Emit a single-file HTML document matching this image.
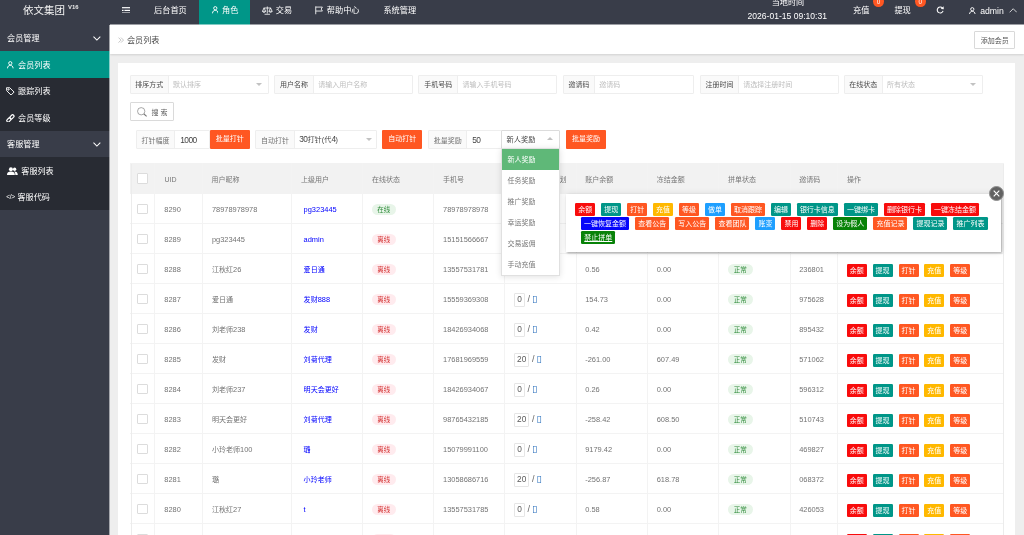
<!DOCTYPE html><html lang="zh"><head><meta charset="utf-8"><title>会员列表</title><style>
html,body{margin:0;padding:0}
html{background:#eee}
body{will-change:transform}
body{width:1024px;height:535px;overflow:hidden;background:#eee;position:relative;font-family:"Liberation Sans","Noto Sans CJK SC",sans-serif;font-size:7px;color:#666}
div,span,a{box-sizing:border-box}
.a{position:absolute;white-space:nowrap}
.hd{left:0;top:0;width:1024px;height:25px;background:#393D49}
.ht{color:#fff;font-size:8.2px;height:20px;line-height:20px;top:0.9px}
.sb{left:0;top:24px;width:110px;height:520px;background:#393D49}
.mi{left:0;width:110px;height:26.5px;line-height:26.5px;color:#fff;font-size:8.1px}
.mi.ch{background:#282B33}
.mi.on{background:#009688}
.mi span{position:absolute;top:1.9px}
.bc{left:110px;top:24.5px;width:914px;height:29.7px;background:#fff;box-shadow:0 0.5px 2px rgba(0,0,0,.12)}
.card{left:118px;top:62.6px;width:897.2px;height:480px;background:#fff}
.fb{top:75.4px;height:18.5px;border:1px solid #eeeeee;border-radius:1px;background:#fff}
.fb .l,.ab .l{position:absolute;left:0;top:0;bottom:0;background:#fafafa;border-right:1px solid #eeeeee;color:#4a4a4a;text-align:center;line-height:18.8px}
.fb .p{position:absolute;top:0;line-height:18.8px;color:#bdbdbd}
.tri{position:absolute;width:0;height:0;border-left:3.1px solid transparent;border-right:3.1px solid transparent;border-top:3.3px solid #c2c2c2}
.triu{position:absolute;width:0;height:0;border-left:3.1px solid transparent;border-right:3.1px solid transparent;border-bottom:3.3px solid #c2c2c2}
.ab{top:130px;height:18.6px;border:1px solid #eeeeee;border-radius:1px;background:#fff}
.ab .l{color:#727272}
.d{font-size:8.3px;letter-spacing:-0.5px}
.ab .v{position:absolute;top:0;line-height:18px;color:#444;font-size:7.2px}
.ob{top:130px;height:18.7px;line-height:18.3px;background:#FF5722;color:#fff;text-align:center;border-radius:1px;font-size:7px}
.th{left:130px;top:163px;width:873.8px;height:31px;background:#f2f2f2}
.tr{left:130px;width:873.8px;height:30px;border-bottom:1px solid #f3f3f3;background:#fff}
.vl{top:163.2px;width:1px;height:380px;background:#f3f3f3}
.c{position:absolute;top:0;height:100%;white-space:nowrap}
.th .c{line-height:33.5px;color:#777}
.tr .c{line-height:31.3px;color:#747474;font-size:7.05px}
.n{font-size:7.45px}
.tr .lk{color:#0000ff;font-size:7.05px}
.cb{position:absolute;left:7.1px;width:10.8px;height:10.6px;border:1px solid #dcdcdc;border-radius:1px;background:#fff}
.pill{position:absolute;left:9.1px;top:9.8px;height:11.6px;line-height:12.6px;border-radius:5.8px;font-size:6.5px;text-align:center}
.pg{background:#e8f5e9;color:#2e8b3a}
.pr{background:#ffebee;color:#d32f2f}
.b{position:absolute;height:12.75px;line-height:14.2px;border-radius:1.2px;color:#fff;font-size:7px;text-align:center;white-space:nowrap}
.r{background:#f80c0c}.t{background:#009688}.o{background:#FF5722}.y{background:#FFB800}.bl{background:#1E9FFF}.db{background:#0606fa}.g{background:#088208}
.ib{position:absolute;top:9.4px;height:13.2px;line-height:11.6px;border:1px solid #e6e6e6;border-radius:1px;text-align:center;color:#5a5a5a;font-size:8.3px;background:#fff}
.dd{left:501px;top:147.7px;width:58.8px;height:128.6px;background:#fff;border:1px solid #e0e0e0;box-shadow:0 1px 6px rgba(0,0,0,.12)}
.dd div{position:absolute;left:0;width:100%;height:21.2px;line-height:22.6px;padding-left:5.6px;color:#777}
.dd div.s{background:#5FB878;color:#fff}
.pop{left:566.4px;top:193.6px;width:434.6px;height:58.4px;background:#fff;box-shadow:0.5px 0.5px 2px rgba(0,0,0,.33),0 0 7px rgba(0,0,0,.10)}
</style></head><body>
<div class="a hd">
<div class="a" style="left:23px;top:1px;height:19.6px;line-height:19.6px;font-size:10.5px;color:#f2f2f2">依文集团</div>
<div class="a" style="left:68px;top:2.9px;font-size:5.9px;line-height:9px;font-weight:bold;color:#e8e8e8">V16</div>
<svg class="a" style="left:121.8px;top:6.5px" width="8.6" height="6.8" viewBox="0 0 8.6 6.8"><g fill="#fff"><rect x="0" y="0.1" width="8.2" height="1.2"/><rect x="0" y="2.8" width="1.6" height="1.2"/><rect x="2.4" y="2.8" width="5.8" height="1.2"/><rect x="0" y="5.5" width="8.2" height="1.2"/></g></svg>
<div class="a ht" style="left:154px">后台首页</div>
<div class="a" style="left:199px;top:0;width:51.2px;height:25px;background:#009688"></div>
<svg class="a" style="left:211.8px;top:6.2px" width="6.6" height="7.6" viewBox="0 0 13 15"><g fill="none" stroke="#fff" stroke-width="1.85"><circle cx="6.5" cy="4.4" r="3.2"/><path d="M1 14.5 C1 10.5 3.5 8.6 6.5 8.6 C9.5 8.6 12 10.5 12 14.5"/></g></svg>
<div class="a ht" style="left:222px">角色</div>
<svg class="a" style="left:262px;top:5.6px" width="10.6" height="9" viewBox="0 0 21 18"><g fill="none" stroke="#fff" stroke-width="1.6"><path d="M10.5 1 V15 M5 16.5 H16 M3 4 H18"/><path d="M0.8 10.5 L4 4 L7.2 10.5 Z M13.8 10.5 L17 4 L20.2 10.5 Z"/><path d="M0.8 10.5 C1.5 13.5 6.5 13.5 7.2 10.5 M13.8 10.5 C14.5 13.5 19.5 13.5 20.2 10.5"/></g></svg>
<div class="a ht" style="left:275.7px">交易</div>
<svg class="a" style="left:315.4px;top:6px" width="8.4" height="8.6" viewBox="0 0 17 17"><g fill="none" stroke="#fff" stroke-width="1.7"><path d="M1.5 0.5 V16.5"/><path d="M1.5 2 H15 L12.5 6 L15 10 H1.5"/></g></svg>
<div class="a ht" style="left:326.8px">帮助中心</div>
<div class="a ht" style="left:383.4px">系统管理</div>
<div class="a ht" style="left:771.7px;top:-7px;font-size:8.1px">当地时间</div>
<div class="a" style="left:747.6px;top:11.2px;height:10px;line-height:10px;font-size:8.55px;color:#fff">2026-01-15 09:10:31</div>
<div class="a ht" style="left:853.1px;top:0.6px">充值</div>
<div class="a" style="left:873.2px;top:-4px;width:10.8px;height:11.2px;border-radius:5.4px;background:#FF5722;color:#fff;font-size:6.4px;line-height:11.4px;text-align:center">0</div>
<div class="a ht" style="left:894.4px;top:0.6px">提现</div>
<div class="a" style="left:914.8px;top:-4px;width:10.8px;height:11.2px;border-radius:5.4px;background:#FF5722;color:#fff;font-size:6.4px;line-height:11.4px;text-align:center">0</div>
<svg class="a" style="left:935.6px;top:6.3px" width="8.4" height="8" viewBox="0 0 17 16"><path d="M13.2 4.2 A6 6 0 1 0 14.3 9.6" fill="none" stroke="#fff" stroke-width="2.2"/><path d="M9.6 6.2 L15.8 6.6 L15.4 0.6 Z" fill="#fff"/></svg>
<svg class="a" style="left:969.4px;top:6.6px" width="6.6" height="7.6" viewBox="0 0 13 15"><g fill="none" stroke="#fff" stroke-width="1.85"><circle cx="6.5" cy="4.4" r="3.2"/><path d="M1 14.5 C1 10.5 3.5 8.6 6.5 8.6 C9.5 8.6 12 10.5 12 14.5"/></g></svg>
<div class="a ht" style="left:980.2px;top:0.6px;font-size:8.7px">admin</div>
<svg class="a" style="left:1008.8px;top:8.4px" width="8.4" height="4.8" viewBox="0 0 17 10"><path d="M1 9 L8.5 1.5 L16 9" fill="none" stroke="#fff" stroke-width="1.6"/></svg>
</div>
<div class="a sb"></div>
<div class="a mi " style="top:24.50px"><span style="left:7.1px">会员管理</span><svg style="position:absolute;left:92.8px;top:11.6px" width="7.8" height="4.6" viewBox="0 0 16 9"><path d="M1 1 L8 8 L15 1" fill="none" stroke="#fff" stroke-width="2.1"/></svg></div>
<div class="a mi ch on" style="top:51.00px"><svg style="position:absolute;left:7px;top:10.1px" width="6.6" height="7.6" viewBox="0 0 13 15"><g fill="none" stroke="#fff" stroke-width="1.85"><circle cx="6.5" cy="4.4" r="3.2"/><path d="M1 14.5 C1 10.5 3.5 8.6 6.5 8.6 C9.5 8.6 12 10.5 12 14.5"/></g></svg><span style="left:18.1px">会员列表</span></div>
<div class="a mi ch" style="top:77.50px"><svg style="position:absolute;left:6.4px;top:9px" width="8.6" height="8.6" viewBox="0 0 17 17"><g fill="none" stroke="#fff" stroke-width="1.9"><path d="M1 1.5 H7.5 L16 10 L10 16 L1.5 7.5 Z"/><circle cx="5" cy="5" r="1.3"/></g></svg><span style="left:18.1px">跟踪列表</span></div>
<div class="a mi ch" style="top:104.00px"><svg style="position:absolute;left:6.4px;top:9.6px" width="8.8" height="8.8" viewBox="0 0 17 17"><g fill="none" stroke="#fff" stroke-width="2.3"><rect x="-4.6" y="-2.7" width="9.2" height="5.4" rx="2.7" transform="translate(5.6 11.4) rotate(-45)"/><rect x="-4.6" y="-2.7" width="9.2" height="5.4" rx="2.7" transform="translate(11.4 5.6) rotate(-45)"/></g></svg><span style="left:18.1px">会员等级</span></div>
<div class="a mi " style="top:130.50px"><span style="left:7.1px">客服管理</span><svg style="position:absolute;left:92.8px;top:11.6px" width="7.8" height="4.6" viewBox="0 0 16 9"><path d="M1 1 L8 8 L15 1" fill="none" stroke="#fff" stroke-width="2.1"/></svg></div>
<div class="a mi ch" style="top:157.00px"><svg style="position:absolute;left:6.8px;top:10px" width="10.8" height="8" viewBox="0 0 22 16"><g fill="#fff"><circle cx="8" cy="4.5" r="4"/><path d="M0 16 C0 11 3 9 8 9 C13 9 16 11 16 16 Z"/><circle cx="15.5" cy="4.5" r="3.4"/><path d="M17 16 C17 12 16 10 14 9 C19 8.6 22 11 22 16 Z"/></g></svg><span style="left:21.3px">客服列表</span></div>
<div class="a mi ch" style="top:183.50px"><span style="left:6.2px;font-size:6.6px;letter-spacing:-0.3px;top:0">&lt;/&gt;</span><span style="left:17.5px">客服代码</span></div>
<div class="a bc">
<svg class="a" style="left:8.3px;top:12.6px" width="6" height="6.2" viewBox="0 0 12 12"><path d="M1 1 L6 6 L1 11 M6 1 L11 6 L6 11" fill="none" stroke="#b4b4b4" stroke-width="1.5"/></svg>
<div class="a" style="left:16.9px;top:0;height:29.7px;line-height:32.2px;font-size:8.15px;color:#4a4a4a">会员列表</div>
<div class="a" style="left:864.4px;top:6.6px;width:40.5px;height:17.5px;line-height:17.4px;border:1px solid #d9d9d9;border-radius:1px;text-align:center;color:#555;background:#fff">添加会员</div>
</div>
<div class="a card"></div>
<div class="a fb" style="left:129.9px;width:138.9px"><div class="l" style="width:37.8px">排序方式</div><div class="p" style="left:42.2px">默认排序</div><div class="tri" style="right:5.6px;top:6.6px"></div></div>
<div class="a fb" style="left:274.1px;width:138.9px"><div class="l" style="width:38.8px">用户名称</div><div class="p" style="left:43.2px">请输入用户名称</div></div>
<div class="a fb" style="left:418.4px;width:138.9px"><div class="l" style="width:38.8px">手机号码</div><div class="p" style="left:43.2px">请输入手机号码</div></div>
<div class="a fb" style="left:562.9px;width:131.1px"><div class="l" style="width:31.0px">邀请码</div><div class="p" style="left:35.4px">邀请码</div></div>
<div class="a fb" style="left:700.0px;width:138.7px"><div class="l" style="width:37.8px">注册时间</div><div class="p" style="left:42.2px">请选择注册时间</div></div>
<div class="a fb" style="left:843.9px;width:138.9px"><div class="l" style="width:37.8px">在线状态</div><div class="p" style="left:42.2px">所有状态</div><div class="tri" style="right:5.6px;top:6.6px"></div></div>
<div class="a" style="left:130px;top:102px;width:43.8px;height:18.8px;border:1px solid #dadada;border-radius:1px;background:#fff"><svg style="position:absolute;left:6.2px;top:4.2px" width="10.4" height="10" viewBox="0 0 21 20"><g fill="none" stroke="#777" stroke-width="1.3"><circle cx="8.5" cy="8.5" r="7.4"/><path d="M14 14 L19.5 19" stroke-width="2.2"/></g></svg><div class="a" style="left:20.6px;top:0;line-height:20.6px;color:#5a5a5a">搜 索</div></div>
<div class="a ab" style="left:136px;width:74px"><div class="l" style="width:38.2px;line-height:19px">打针幅度</div><div class="v" style="left:43.3px;font-size:8.4px;letter-spacing:-0.6px;line-height:18.6px">1000</div></div>
<div class="a ob" style="left:209.6px;width:40.3px">批量打针</div>
<div class="a ab" style="left:255px;width:122px"><div class="l" style="width:39px;line-height:19px">自动打针</div><div class="v" style="left:43.2px;line-height:17.4px"><span class="d">30</span>打针(代<span class="d">4</span>)</div><div class="tri" style="right:4.4px;top:6.8px"></div></div>
<div class="a ob" style="left:382.3px;width:40.1px">自动打针</div>
<div class="a ab" style="left:428px;width:74px"><div class="l" style="width:38.3px;line-height:19px">批量奖励</div><div class="v" style="left:43.2px;font-size:8.4px;letter-spacing:-0.6px;line-height:18.6px">50</div></div>
<div class="a ab" style="left:501px;width:58.8px;border-color:#dcdcdc"><div class="v" style="left:4.6px">新人奖励</div><div class="triu" style="right:5.8px;top:6.2px"></div></div>
<div class="a ob" style="left:565.9px;width:40.1px">批量奖励</div>
<div class="a th">
<div class="cb" style="top:10.4px"></div>
<div class="c" style="left:34.4px">UID</div>
<div class="c" style="left:81.6px">用户昵称</div>
<div class="c" style="left:171.0px">上级用户</div>
<div class="c" style="left:241.9px">在线状态</div>
<div class="c" style="left:313.1px">手机号</div>
<div class="c" style="left:455.3px">账户余额</div>
<div class="c" style="left:526.8px">冻结金额</div>
<div class="c" style="left:598.0px">拼单状态</div>
<div class="c" style="left:669.3px">邀请码</div>
<div class="c" style="left:716.9px">操作</div>
<div class="c" style="left:auto;right:437.2px">已做单数/计划</div>
</div>
<div class="a tr" style="top:194.00px">
<div class="cb" style="top:9.8px"></div>
<div class="c" style="left:34.3px"><span class="n">8290</span></div>
<div class="c" style="left:81.9px"><span class="n">78978978978</span></div>
<div class="c lk" style="left:173.6px"><span class="n">pg323445</span></div>
<div class="c" style="left:232.6px"><span class="pill pg" style="width:24.2px">在线</span></div>
<div class="c" style="left:313.0px"><span class="n">78978978978</span></div>
<span class="b r" style="left:716.8px;top:9.6px;width:20px;height:13px">余额</span>
<span class="b t" style="left:742.6px;top:9.6px;width:20px;height:13px">提现</span>
<span class="b o" style="left:768.5px;top:9.6px;width:20px;height:13px">打针</span>
<span class="b y" style="left:794.3px;top:9.6px;width:20px;height:13px">充值</span>
<span class="b o" style="left:820.2px;top:9.6px;width:20px;height:13px">等级</span>
</div>
<div class="a tr" style="top:224.00px">
<div class="cb" style="top:9.8px"></div>
<div class="c" style="left:34.3px"><span class="n">8289</span></div>
<div class="c" style="left:81.9px"><span class="n">pg323445</span></div>
<div class="c lk" style="left:173.6px"><span class="n">admin</span></div>
<div class="c" style="left:232.6px"><span class="pill pr" style="width:24.2px">离线</span></div>
<div class="c" style="left:313.0px"><span class="n">15151566667</span></div>
<span class="b r" style="left:716.8px;top:9.6px;width:20px;height:13px">余额</span>
<span class="b t" style="left:742.6px;top:9.6px;width:20px;height:13px">提现</span>
<span class="b o" style="left:768.5px;top:9.6px;width:20px;height:13px">打针</span>
<span class="b y" style="left:794.3px;top:9.6px;width:20px;height:13px">充值</span>
<span class="b o" style="left:820.2px;top:9.6px;width:20px;height:13px">等级</span>
</div>
<div class="a tr" style="top:254.00px">
<div class="cb" style="top:9.8px"></div>
<div class="c" style="left:34.3px"><span class="n">8288</span></div>
<div class="c" style="left:81.9px">江秋红<span class="n">26</span></div>
<div class="c lk" style="left:173.6px">爱日通</div>
<div class="c" style="left:232.6px"><span class="pill pr" style="width:24.2px">离线</span></div>
<div class="c" style="left:313.0px"><span class="n">13557531781</span></div>
<div class="c" style="left:455.2px"><span class="n">0.56</span></div>
<div class="c" style="left:526.7px"><span class="n">0.00</span></div>
<div class="c" style="left:588.7px"><span class="pill pg" style="width:25px">正常</span></div>
<div class="c" style="left:669.2px"><span class="n">236801</span></div>
<span class="b r" style="left:716.8px;top:9.6px;width:20px;height:13px">余额</span>
<span class="b t" style="left:742.6px;top:9.6px;width:20px;height:13px">提现</span>
<span class="b o" style="left:768.5px;top:9.6px;width:20px;height:13px">打针</span>
<span class="b y" style="left:794.3px;top:9.6px;width:20px;height:13px">充值</span>
<span class="b o" style="left:820.2px;top:9.6px;width:20px;height:13px">等级</span>
</div>
<div class="a tr" style="top:284.00px">
<div class="cb" style="top:9.8px"></div>
<div class="c" style="left:34.3px"><span class="n">8287</span></div>
<div class="c" style="left:81.9px">爱日通</div>
<div class="c lk" style="left:173.6px">发财<span class="n">888</span></div>
<div class="c" style="left:232.6px"><span class="pill pr" style="width:24.2px">离线</span></div>
<div class="c" style="left:313.0px"><span class="n">15559369308</span></div>
<div class="c" style="left:384.2px"><span class="ib" style="left:0;width:10.6px">0</span><span style="position:absolute;left:13.3px;font-size:9px;color:#666">/</span><span style="position:absolute;left:17.8px;top:-1px;font-size:9.6px;color:#2a6fbd;font-family:'DejaVu Sans',sans-serif">▯</span></div>
<div class="c" style="left:455.2px"><span class="n">154.73</span></div>
<div class="c" style="left:526.7px"><span class="n">0.00</span></div>
<div class="c" style="left:588.7px"><span class="pill pg" style="width:25px">正常</span></div>
<div class="c" style="left:669.2px"><span class="n">975628</span></div>
<span class="b r" style="left:716.8px;top:9.6px;width:20px;height:13px">余额</span>
<span class="b t" style="left:742.6px;top:9.6px;width:20px;height:13px">提现</span>
<span class="b o" style="left:768.5px;top:9.6px;width:20px;height:13px">打针</span>
<span class="b y" style="left:794.3px;top:9.6px;width:20px;height:13px">充值</span>
<span class="b o" style="left:820.2px;top:9.6px;width:20px;height:13px">等级</span>
</div>
<div class="a tr" style="top:314.00px">
<div class="cb" style="top:9.8px"></div>
<div class="c" style="left:34.3px"><span class="n">8286</span></div>
<div class="c" style="left:81.9px">刘老师<span class="n">238</span></div>
<div class="c lk" style="left:173.6px">发财</div>
<div class="c" style="left:232.6px"><span class="pill pr" style="width:24.2px">离线</span></div>
<div class="c" style="left:313.0px"><span class="n">18426934068</span></div>
<div class="c" style="left:384.2px"><span class="ib" style="left:0;width:10.6px">0</span><span style="position:absolute;left:13.3px;font-size:9px;color:#666">/</span><span style="position:absolute;left:17.8px;top:-1px;font-size:9.6px;color:#2a6fbd;font-family:'DejaVu Sans',sans-serif">▯</span></div>
<div class="c" style="left:455.2px"><span class="n">0.42</span></div>
<div class="c" style="left:526.7px"><span class="n">0.00</span></div>
<div class="c" style="left:588.7px"><span class="pill pg" style="width:25px">正常</span></div>
<div class="c" style="left:669.2px"><span class="n">895432</span></div>
<span class="b r" style="left:716.8px;top:9.6px;width:20px;height:13px">余额</span>
<span class="b t" style="left:742.6px;top:9.6px;width:20px;height:13px">提现</span>
<span class="b o" style="left:768.5px;top:9.6px;width:20px;height:13px">打针</span>
<span class="b y" style="left:794.3px;top:9.6px;width:20px;height:13px">充值</span>
<span class="b o" style="left:820.2px;top:9.6px;width:20px;height:13px">等级</span>
</div>
<div class="a tr" style="top:344.00px">
<div class="cb" style="top:9.8px"></div>
<div class="c" style="left:34.3px"><span class="n">8285</span></div>
<div class="c" style="left:81.9px">发财</div>
<div class="c lk" style="left:173.6px">刘菊代理</div>
<div class="c" style="left:232.6px"><span class="pill pr" style="width:24.2px">离线</span></div>
<div class="c" style="left:313.0px"><span class="n">17681969559</span></div>
<div class="c" style="left:384.2px"><span class="ib" style="left:0;width:15.0px">20</span><span style="position:absolute;left:17.7px;font-size:9px;color:#666">/</span><span style="position:absolute;left:22.2px;top:-1px;font-size:9.6px;color:#2a6fbd;font-family:'DejaVu Sans',sans-serif">▯</span></div>
<div class="c" style="left:455.2px"><span class="n">-261.00</span></div>
<div class="c" style="left:526.7px"><span class="n">607.49</span></div>
<div class="c" style="left:588.7px"><span class="pill pg" style="width:25px">正常</span></div>
<div class="c" style="left:669.2px"><span class="n">571062</span></div>
<span class="b r" style="left:716.8px;top:9.6px;width:20px;height:13px">余额</span>
<span class="b t" style="left:742.6px;top:9.6px;width:20px;height:13px">提现</span>
<span class="b o" style="left:768.5px;top:9.6px;width:20px;height:13px">打针</span>
<span class="b y" style="left:794.3px;top:9.6px;width:20px;height:13px">充值</span>
<span class="b o" style="left:820.2px;top:9.6px;width:20px;height:13px">等级</span>
</div>
<div class="a tr" style="top:374.00px">
<div class="cb" style="top:9.8px"></div>
<div class="c" style="left:34.3px"><span class="n">8284</span></div>
<div class="c" style="left:81.9px">刘老师<span class="n">237</span></div>
<div class="c lk" style="left:173.6px">明天会更好</div>
<div class="c" style="left:232.6px"><span class="pill pr" style="width:24.2px">离线</span></div>
<div class="c" style="left:313.0px"><span class="n">18426934067</span></div>
<div class="c" style="left:384.2px"><span class="ib" style="left:0;width:10.6px">0</span><span style="position:absolute;left:13.3px;font-size:9px;color:#666">/</span><span style="position:absolute;left:17.8px;top:-1px;font-size:9.6px;color:#2a6fbd;font-family:'DejaVu Sans',sans-serif">▯</span></div>
<div class="c" style="left:455.2px"><span class="n">0.26</span></div>
<div class="c" style="left:526.7px"><span class="n">0.00</span></div>
<div class="c" style="left:588.7px"><span class="pill pg" style="width:25px">正常</span></div>
<div class="c" style="left:669.2px"><span class="n">596312</span></div>
<span class="b r" style="left:716.8px;top:9.6px;width:20px;height:13px">余额</span>
<span class="b t" style="left:742.6px;top:9.6px;width:20px;height:13px">提现</span>
<span class="b o" style="left:768.5px;top:9.6px;width:20px;height:13px">打针</span>
<span class="b y" style="left:794.3px;top:9.6px;width:20px;height:13px">充值</span>
<span class="b o" style="left:820.2px;top:9.6px;width:20px;height:13px">等级</span>
</div>
<div class="a tr" style="top:404.00px">
<div class="cb" style="top:9.8px"></div>
<div class="c" style="left:34.3px"><span class="n">8283</span></div>
<div class="c" style="left:81.9px">明天会更好</div>
<div class="c lk" style="left:173.6px">刘菊代理</div>
<div class="c" style="left:232.6px"><span class="pill pr" style="width:24.2px">离线</span></div>
<div class="c" style="left:313.0px"><span class="n">98765432185</span></div>
<div class="c" style="left:384.2px"><span class="ib" style="left:0;width:15.0px">20</span><span style="position:absolute;left:17.7px;font-size:9px;color:#666">/</span><span style="position:absolute;left:22.2px;top:-1px;font-size:9.6px;color:#2a6fbd;font-family:'DejaVu Sans',sans-serif">▯</span></div>
<div class="c" style="left:455.2px"><span class="n">-258.42</span></div>
<div class="c" style="left:526.7px"><span class="n">608.50</span></div>
<div class="c" style="left:588.7px"><span class="pill pg" style="width:25px">正常</span></div>
<div class="c" style="left:669.2px"><span class="n">510743</span></div>
<span class="b r" style="left:716.8px;top:9.6px;width:20px;height:13px">余额</span>
<span class="b t" style="left:742.6px;top:9.6px;width:20px;height:13px">提现</span>
<span class="b o" style="left:768.5px;top:9.6px;width:20px;height:13px">打针</span>
<span class="b y" style="left:794.3px;top:9.6px;width:20px;height:13px">充值</span>
<span class="b o" style="left:820.2px;top:9.6px;width:20px;height:13px">等级</span>
</div>
<div class="a tr" style="top:434.00px">
<div class="cb" style="top:9.8px"></div>
<div class="c" style="left:34.3px"><span class="n">8282</span></div>
<div class="c" style="left:81.9px">小玲老师<span class="n">100</span></div>
<div class="c lk" style="left:173.6px">璐</div>
<div class="c" style="left:232.6px"><span class="pill pr" style="width:24.2px">离线</span></div>
<div class="c" style="left:313.0px"><span class="n">15079991100</span></div>
<div class="c" style="left:384.2px"><span class="ib" style="left:0;width:10.6px">0</span><span style="position:absolute;left:13.3px;font-size:9px;color:#666">/</span><span style="position:absolute;left:17.8px;top:-1px;font-size:9.6px;color:#2a6fbd;font-family:'DejaVu Sans',sans-serif">▯</span></div>
<div class="c" style="left:455.2px"><span class="n">9179.42</span></div>
<div class="c" style="left:526.7px"><span class="n">0.00</span></div>
<div class="c" style="left:588.7px"><span class="pill pg" style="width:25px">正常</span></div>
<div class="c" style="left:669.2px"><span class="n">469827</span></div>
<span class="b r" style="left:716.8px;top:9.6px;width:20px;height:13px">余额</span>
<span class="b t" style="left:742.6px;top:9.6px;width:20px;height:13px">提现</span>
<span class="b o" style="left:768.5px;top:9.6px;width:20px;height:13px">打针</span>
<span class="b y" style="left:794.3px;top:9.6px;width:20px;height:13px">充值</span>
<span class="b o" style="left:820.2px;top:9.6px;width:20px;height:13px">等级</span>
</div>
<div class="a tr" style="top:464.00px">
<div class="cb" style="top:9.8px"></div>
<div class="c" style="left:34.3px"><span class="n">8281</span></div>
<div class="c" style="left:81.9px">璐</div>
<div class="c lk" style="left:173.6px">小玲老师</div>
<div class="c" style="left:232.6px"><span class="pill pr" style="width:24.2px">离线</span></div>
<div class="c" style="left:313.0px"><span class="n">13058686716</span></div>
<div class="c" style="left:384.2px"><span class="ib" style="left:0;width:15.0px">20</span><span style="position:absolute;left:17.7px;font-size:9px;color:#666">/</span><span style="position:absolute;left:22.2px;top:-1px;font-size:9.6px;color:#2a6fbd;font-family:'DejaVu Sans',sans-serif">▯</span></div>
<div class="c" style="left:455.2px"><span class="n">-256.87</span></div>
<div class="c" style="left:526.7px"><span class="n">618.78</span></div>
<div class="c" style="left:588.7px"><span class="pill pg" style="width:25px">正常</span></div>
<div class="c" style="left:669.2px"><span class="n">068372</span></div>
<span class="b r" style="left:716.8px;top:9.6px;width:20px;height:13px">余额</span>
<span class="b t" style="left:742.6px;top:9.6px;width:20px;height:13px">提现</span>
<span class="b o" style="left:768.5px;top:9.6px;width:20px;height:13px">打针</span>
<span class="b y" style="left:794.3px;top:9.6px;width:20px;height:13px">充值</span>
<span class="b o" style="left:820.2px;top:9.6px;width:20px;height:13px">等级</span>
</div>
<div class="a tr" style="top:494.00px">
<div class="cb" style="top:9.8px"></div>
<div class="c" style="left:34.3px"><span class="n">8280</span></div>
<div class="c" style="left:81.9px">江秋红<span class="n">27</span></div>
<div class="c lk" style="left:173.6px"><span class="n">t</span></div>
<div class="c" style="left:232.6px"><span class="pill pr" style="width:24.2px">离线</span></div>
<div class="c" style="left:313.0px"><span class="n">13557531785</span></div>
<div class="c" style="left:384.2px"><span class="ib" style="left:0;width:10.6px">0</span><span style="position:absolute;left:13.3px;font-size:9px;color:#666">/</span><span style="position:absolute;left:17.8px;top:-1px;font-size:9.6px;color:#2a6fbd;font-family:'DejaVu Sans',sans-serif">▯</span></div>
<div class="c" style="left:455.2px"><span class="n">0.58</span></div>
<div class="c" style="left:526.7px"><span class="n">0.00</span></div>
<div class="c" style="left:588.7px"><span class="pill pg" style="width:25px">正常</span></div>
<div class="c" style="left:669.2px"><span class="n">426053</span></div>
<span class="b r" style="left:716.8px;top:9.6px;width:20px;height:13px">余额</span>
<span class="b t" style="left:742.6px;top:9.6px;width:20px;height:13px">提现</span>
<span class="b o" style="left:768.5px;top:9.6px;width:20px;height:13px">打针</span>
<span class="b y" style="left:794.3px;top:9.6px;width:20px;height:13px">充值</span>
<span class="b o" style="left:820.2px;top:9.6px;width:20px;height:13px">等级</span>
</div>
<div class="a tr" style="top:524.00px">
<div class="cb" style="top:9.8px"></div>
<div class="c" style="left:34.3px"><span class="n">8279</span></div>
<div class="c" style="left:232.6px"><span class="pill pr" style="width:24.2px">离线</span></div>
<span class="b r" style="left:716.8px;top:9.6px;width:20px;height:13px">余额</span>
<span class="b t" style="left:742.6px;top:9.6px;width:20px;height:13px">提现</span>
<span class="b o" style="left:768.5px;top:9.6px;width:20px;height:13px">打针</span>
<span class="b y" style="left:794.3px;top:9.6px;width:20px;height:13px">充值</span>
<span class="b o" style="left:820.2px;top:9.6px;width:20px;height:13px">等级</span>
</div>
<div class="a vl" style="left:153.7px"></div>
<div class="a vl" style="left:201.8px"></div>
<div class="a vl" style="left:291.2px"></div>
<div class="a vl" style="left:362.1px"></div>
<div class="a vl" style="left:433.3px"></div>
<div class="a vl" style="left:504.3px"></div>
<div class="a vl" style="left:575.5px"></div>
<div class="a vl" style="left:647.0px"></div>
<div class="a vl" style="left:718.2px"></div>
<div class="a vl" style="left:789.5px"></div>
<div class="a vl" style="left:837.1px"></div>
<div class="a" style="left:130.5px;top:163.75px;width:1px;height:380px;background:#ececec"></div>
<div class="a" style="left:1003.3px;top:163.75px;width:1px;height:380px;background:#ececec"></div>
<div class="a dd">
<div class="s" style="top:0.0px">新人奖励</div>
<div class="" style="top:21.1px">任务奖励</div>
<div class="" style="top:42.3px">推广奖励</div>
<div class="" style="top:63.4px">幸运奖励</div>
<div class="" style="top:84.6px">交易返佣</div>
<div class="" style="top:105.8px">手动充值</div>
</div>
<div class="a pop">
<span class="b r" style="left:8.8px;top:9.5px;width:20.0px">余额</span>
<span class="b t" style="left:34.8px;top:9.5px;width:20.0px">提现</span>
<span class="b o" style="left:60.8px;top:9.5px;width:20.0px">打针</span>
<span class="b y" style="left:86.7px;top:9.5px;width:20.0px">充值</span>
<span class="b o" style="left:112.6px;top:9.5px;width:20.0px">等级</span>
<span class="b bl" style="left:138.6px;top:9.5px;width:20.0px">做单</span>
<span class="b o" style="left:164.6px;top:9.5px;width:34.0px">取消跟踪</span>
<span class="b t" style="left:204.6px;top:9.5px;width:20.0px">编辑</span>
<span class="b t" style="left:230.6px;top:9.5px;width:40.8px">银行卡信息</span>
<span class="b t" style="left:277.6px;top:9.5px;width:34.0px">一键绑卡</span>
<span class="b r" style="left:317.6px;top:9.5px;width:41.0px">删除银行卡</span>
<span class="b r" style="left:364.6px;top:9.5px;width:48.0px">一键冻结金额</span>
<span class="b db" style="left:14.7px;top:23.2px;width:48.0px">一键恢复金额</span>
<span class="b o" style="left:68.9px;top:23.2px;width:34.0px">查看公告</span>
<span class="b o" style="left:108.9px;top:23.2px;width:34.0px">写入公告</span>
<span class="b o" style="left:149.0px;top:23.2px;width:34.0px">查看团队</span>
<span class="b bl" style="left:189.1px;top:23.2px;width:20.0px">账变</span>
<span class="b r" style="left:215.1px;top:23.2px;width:20.0px">禁用</span>
<span class="b r" style="left:240.9px;top:23.2px;width:20.0px">删除</span>
<span class="b g" style="left:266.8px;top:23.2px;width:34.0px">设为假人</span>
<span class="b o" style="left:307.0px;top:23.2px;width:34.0px">充值记录</span>
<span class="b t" style="left:347.0px;top:23.2px;width:34.0px">提现记录</span>
<span class="b t" style="left:386.9px;top:23.2px;width:34.4px">推广列表</span>
<span class="b g" style="left:14.7px;top:37.2px;width:34.4px;text-decoration:underline">禁止拼单</span>
</div>
<div class="a" style="left:989.2px;top:185.8px;width:15.3px;height:15.3px;border-radius:50%;background:#626262;border:1px solid #909090"><svg style="position:absolute;left:3.1px;top:3.1px" width="7" height="7" viewBox="0 0 10 10"><path d="M1 1 L9 9 M9 1 L1 9" stroke="#fff" stroke-width="1.6" fill="none"/></svg></div>
<div class="a" style="left:110px;top:24px;width:914px;height:1px;background:rgba(255,255,255,.5)"></div>
<div class="a" style="left:109px;top:25px;width:1px;height:510px;background:rgba(255,255,255,.55)"></div>
</body></html>
